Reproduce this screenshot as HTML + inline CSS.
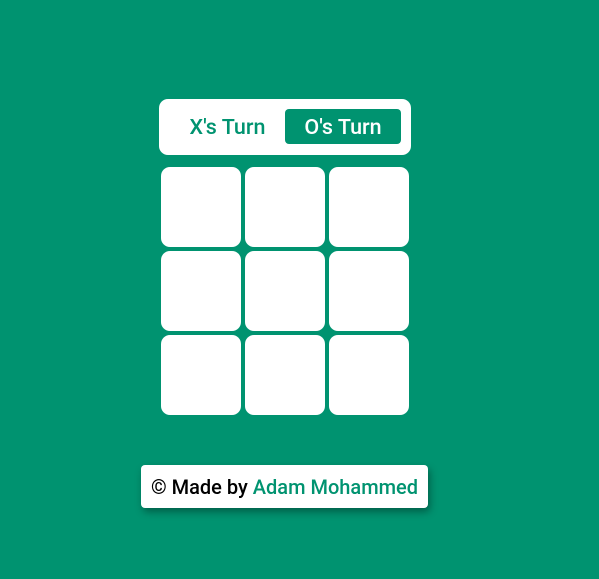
<!DOCTYPE html>
<html><head><meta charset="utf-8"><style>
html,body{margin:0;padding:0;}
body{width:599px;height:579px;background:#009370;position:relative;overflow:hidden;font-family:"Roboto","Liberation Sans",sans-serif;}
.panel{position:absolute;left:159px;top:99px;width:252px;height:56px;background:#fff;border-radius:9px;}
.x{position:absolute;left:170px;top:110px;width:115px;height:35px;line-height:35px;text-align:center;color:#009370;font-size:21.5px;font-weight:500;}
.o{position:absolute;left:285px;top:109px;width:116px;height:35px;line-height:37px;text-align:center;background:#009370;color:#fff;font-size:21.5px;font-weight:500;border-radius:4px;}
.cell{position:absolute;width:80px;height:80px;background:#fff;border-radius:9px;}
.foot{position:absolute;left:141px;top:465px;width:287px;height:43px;background:#fff;border-radius:4px;box-shadow:2px 4px 8px rgba(0,0,0,0.35);font-size:20px;font-weight:500;line-height:45px;text-align:center;color:#000;white-space:nowrap;}
.foot span{color:#009370;}
</style></head><body>
<div class="panel"></div>
<div class="x">X's Turn</div>
<div class="o">O's Turn</div>
<div class="cell" style="left:161px;top:167px"></div>
<div class="cell" style="left:245px;top:167px"></div>
<div class="cell" style="left:329px;top:167px"></div>
<div class="cell" style="left:161px;top:251px"></div>
<div class="cell" style="left:245px;top:251px"></div>
<div class="cell" style="left:329px;top:251px"></div>
<div class="cell" style="left:161px;top:335px"></div>
<div class="cell" style="left:245px;top:335px"></div>
<div class="cell" style="left:329px;top:335px"></div>
<div class="foot">© Made by <span>Adam Mohammed</span></div>
</body></html>
